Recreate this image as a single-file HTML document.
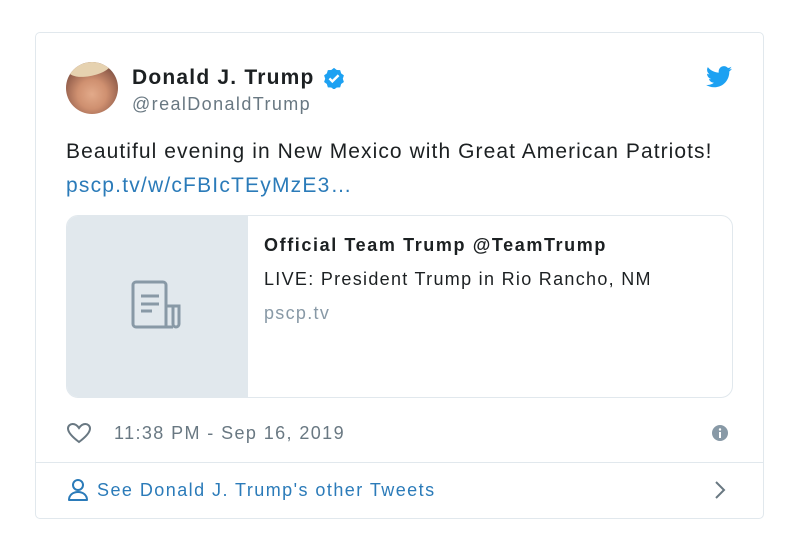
<!DOCTYPE html>
<html><head><meta charset="utf-8"><style>
body{margin:0;width:799px;height:554px;background:#fff;font-family:"Liberation Sans",sans-serif;position:relative;overflow:hidden}
.a{position:absolute;white-space:nowrap}
</style></head><body>
<div class="a" style="left:35px;top:32px;width:727px;height:485px;border:1px solid #e1e8ed;border-radius:5px"></div>
<div class="a" style="left:66px;top:62px;width:52px;height:52px;border-radius:50%;overflow:hidden;background:radial-gradient(circle at 50% 62%,#e2aa8a 0%,#cf9070 35%,#9a6450 65%,#4a3430 100%)">
<div style="position:absolute;left:2px;top:-4px;width:44px;height:18px;border-radius:50%;background:#e6d2b0;transform:rotate(-12deg)"></div></div>
<div class="a" style="left:132px;top:66px;font-size:21px;font-weight:bold;color:#1c2022;letter-spacing:1.2px">Donald J. Trump</div>
<svg class="a" style="left:323px;top:67px" width="22" height="22" viewBox="0 0 24 24"><path fill="#1da1f2" d="M12 1l3 2.3 3.7.1 1.1 3.6 3 2.2-1.2 3.6 1.2 3.6-3 2.2-1.1 3.6-3.7.1L12 24.6l-3-2.3-3.7-.1-1.1-3.6-3-2.2L2.4 12.8 1.2 9.2l3-2.2L5.3 3.4 9 3.3z"/><path d="M7 12.5l3.2 3.2L17 9" stroke="#fff" stroke-width="2.6" fill="none"/></svg>
<div class="a" style="left:132px;top:94px;font-size:18px;color:#697882;letter-spacing:1.4px">@realDonaldTrump</div>
<svg class="a" style="left:706px;top:66px" width="26" height="22" viewBox="0 0 24 20"><path fill="#1da1f2" d="M24 2.4c-.9.4-1.8.6-2.8.8 1-.6 1.8-1.6 2.2-2.7-1 .6-2 1-3.1 1.2C19.3.7 18 0 16.6 0c-2.7 0-4.900 2.2-4.900 4.900 0 .4 0 .8.1 1.100C7.7 5.8 4.1 3.9 1.7.9c-.4.7-.7 1.600-.7 2.500 0 1.700.9 3.200 2.200 4.100-.8 0-1.600-.2-2.200-.6v.1c0 2.400 1.700 4.400 3.900 4.800-.4.1-.8.2-1.300.2-.3 0-.6 0-.9-.1.6 2 2.400 3.400 4.600 3.400-1.700 1.300-3.800 2.100-6.100 2.100-.4 0-.8 0-1.200-.1 2.200 1.400 4.800 2.200 7.500 2.200 9.100 0 14-7.500 14-14v-.6c1-.7 1.800-1.600 2.500-2.500z"/></svg>
<div class="a" style="left:66px;top:140px;font-size:21px;color:#1c2022;letter-spacing:1.07px">Beautiful evening in New Mexico with Great American Patriots!</div>
<div class="a" style="left:66px;top:174px;font-size:21px;color:#2b7bb9;letter-spacing:1.2px">pscp.tv/w/cFBIcTEyMzE3…</div>
<div class="a" style="left:66px;top:215px;width:665px;height:181px;border:1px solid #e1e8ed;border-radius:12px;overflow:hidden">
<div style="position:absolute;left:0;top:0;width:181px;height:181px;background:#e1e8ed"></div>
<svg style="position:absolute;left:63px;top:64px" width="56" height="52" viewBox="0 0 56 52"><path d="M22 47H6a3 3 0 0 1-3-3V5a3 3 0 0 1 3-3h27a3 3 0 0 1 3 3v42M36 26h13v18a3 3 0 0 1-6 0V26M43 47H22M11 16h18M11 24h18M11 31h11" stroke="#8899a6" stroke-width="3" fill="none"/></svg>
</div>
<div class="a" style="left:264px;top:235px;font-size:18px;font-weight:bold;color:#1c2022;letter-spacing:1.6px">Official Team Trump @TeamTrump</div>
<div class="a" style="left:264px;top:269px;font-size:18px;color:#1c2022;letter-spacing:1.3px">LIVE: President Trump in Rio Rancho, NM</div>
<div class="a" style="left:264px;top:303px;font-size:18px;color:#8899a6;letter-spacing:1.3px">pscp.tv</div>
<svg class="a" style="left:66px;top:422px" width="26" height="22" viewBox="0 0 26 22"><path d="M13 20C5 14 2 10 2 6.5 2 3.8 4.2 2 6.7 2 9.5 2 11.5 3.8 13 6 14.5 3.8 16.5 2 19.3 2 21.8 2 24 3.8 24 6.5 24 10 21 14 13 20z" stroke="#697882" stroke-width="2" fill="none"/></svg>
<div class="a" style="left:114px;top:423px;font-size:18px;color:#697882;letter-spacing:1.4px">11:38 PM - Sep 16, 2019</div>
<svg class="a" style="left:712px;top:425px" width="16" height="16" viewBox="0 0 16 16"><circle cx="8" cy="8" r="8" fill="#8899a6"/><rect x="7" y="7" width="2" height="6" fill="#fff"/><circle cx="8" cy="4.5" r="1.2" fill="#fff"/></svg>
<div class="a" style="left:36px;top:462px;width:727px;height:1px;background:#e1e8ed"></div>
<svg class="a" style="left:67px;top:478px" width="22" height="24" viewBox="0 0 22 24"><circle cx="11" cy="7" r="5" stroke="#2b7bb9" stroke-width="2" fill="none"/><path d="M2 22c0-5 4-8 9-8s9 3 9 8z" stroke="#2b7bb9" stroke-width="2" fill="none" stroke-linejoin="round"/></svg>
<div class="a" style="left:97px;top:480px;font-size:18px;color:#2b7bb9;letter-spacing:1.45px">See Donald J. Trump's other Tweets</div>
<svg class="a" style="left:713px;top:480px" width="14" height="20" viewBox="0 0 14 20"><path d="M3 2l8 8-8 8" stroke="#697882" stroke-width="2" fill="none"/></svg>
</body></html>
